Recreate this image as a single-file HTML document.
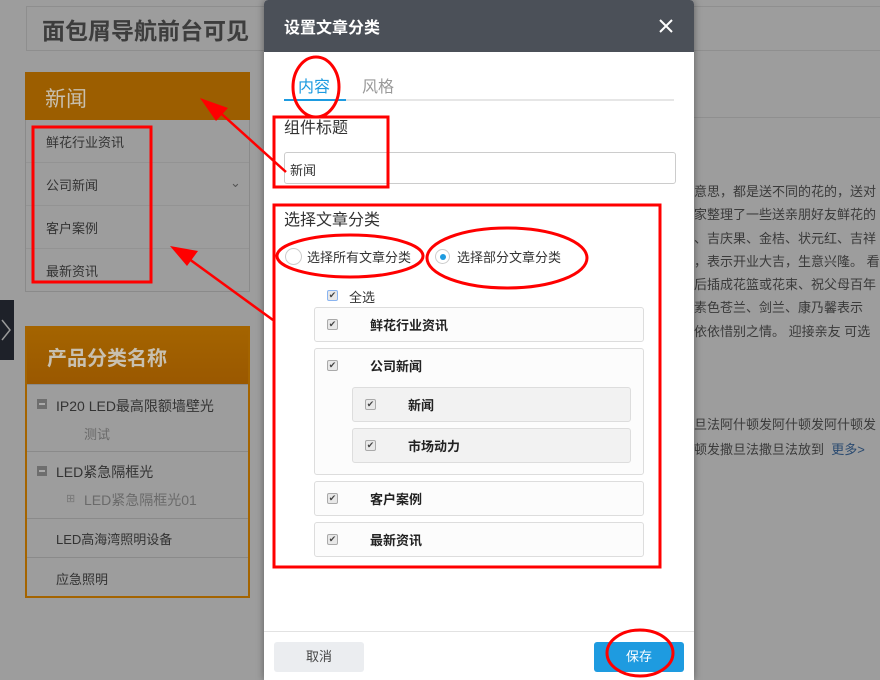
<!DOCTYPE html>
<html style="background:#9d9d9d"><head><meta charset="utf-8"><style>
*{margin:0;padding:0;box-sizing:border-box}
html,body{background:#9d9d9d}
body{width:880px;height:680px;overflow:hidden;position:relative;font-family:"Liberation Sans","Noto Sans CJK SC",sans-serif;color:#3a3a3a}
.a{position:absolute;white-space:nowrap;line-height:1.8}
.t{font-size:13px;color:#333}
.cb{position:absolute;width:11px;height:11px;border:1px solid #aaa;background:#e8e8e8;border-radius:2px;font-size:9px;line-height:9px;text-align:center;color:#444}
.box{position:absolute;border:1px solid #ddd;border-radius:3px;background:#fcfcfc}
.bi{position:absolute;font-size:13px;font-weight:bold;color:#222;line-height:1.8;white-space:nowrap}
</style></head><body>
<div class="a" style="left:0;top:0;width:880px;height:680px;background:#9d9d9d"></div>
<div class="a" style="left:26px;top:6px;width:240px;height:45px;border:1px solid #8e8e8e;border-right:none"></div>
<div class="a" style="left:42px;top:11px;font-size:23px;font-weight:bold;color:#3d3d3d">面包屑导航前台可见</div>
<div class="a" style="left:25px;top:72px;width:225px;height:48px;background:#9c5e00"></div>
<div class="a" style="left:45px;top:81px;font-size:21px;color:#c8c0b0">新闻</div>
<div class="a" style="left:25px;top:120px;width:225px;height:172px;border:1px solid #8a8a8a;border-top:none"></div>
<div class="a" style="left:26px;top:162px;width:223px;border-top:1px solid #939393"></div>
<div class="a" style="left:26px;top:205px;width:223px;border-top:1px solid #939393"></div>
<div class="a" style="left:26px;top:248px;width:223px;border-top:1px solid #939393"></div>
<div class="a t" style="left:46px;top:131px">鲜花行业资讯</div>
<div class="a t" style="left:46px;top:174px">公司新闻</div>
<div class="a" style="left:230px;top:171px;font-size:13px;color:#555">&#8964;</div>
<div class="a t" style="left:46px;top:217px">客户案例</div>
<div class="a t" style="left:46px;top:260px">最新资讯</div>
<div class="a" style="left:0;top:300px;width:14px;height:60px;background:#1e2129"></div>
<svg class="a" style="left:0;top:318px" width="14" height="24"><path d="M2 2 L10 12 L2 22" fill="none" stroke="#999" stroke-width="1.5"/></svg>

<div class="a" style="left:25px;top:326px;width:225px;height:272px;border:2px solid #a46400"></div>
<div class="a" style="left:27px;top:328px;width:221px;height:56px;background:linear-gradient(#a46400,#9a5800)"></div>
<div class="a" style="left:47px;top:341px;font-size:20px;font-weight:bold;color:#c8c0b0">产品分类名称</div>
<div class="a" style="left:27px;top:384px;width:221px;border-top:1px solid #8a8a8a"></div>
<div class="a" style="left:27px;top:451px;width:221px;border-top:1px solid #8a8a8a"></div>
<div class="a" style="left:27px;top:518px;width:221px;border-top:1px solid #8a8a8a"></div>
<div class="a" style="left:27px;top:557px;width:221px;border-top:1px solid #8a8a8a"></div>
<div class="a" style="left:37px;top:399px;width:10px;height:10px;background:#6e6e6e"></div><div class="a" style="left:39px;top:403px;width:6px;height:2px;background:#aaa"></div>
<div class="a" style="left:56px;top:394px;font-size:14px;color:#333">IP20 LED最高限额墙壁光</div>
<div class="a" style="left:84px;top:423px;font-size:13px;color:#6a6a6a">测试</div>
<div class="a" style="left:37px;top:466px;width:10px;height:10px;background:#6e6e6e"></div><div class="a" style="left:39px;top:470px;width:6px;height:2px;background:#aaa"></div>
<div class="a" style="left:56px;top:460px;font-size:14px;color:#333">LED紧急隔框光</div>
<div class="a" style="left:66px;top:490px;font-size:11px;color:#777">⊞</div>
<div class="a" style="left:84px;top:488px;font-size:14px;color:#6a6a6a">LED紧急隔框光01</div>
<div class="a" style="left:56px;top:528px;font-size:13px;color:#333">LED高海湾照明设备</div>
<div class="a" style="left:56px;top:568px;font-size:13px;color:#333">应急照明</div>

<div class="a" style="left:694px;top:6px;width:186px;border-top:1px solid #8f8f8f"></div>
<div class="a" style="left:694px;top:50px;width:186px;border-top:1px solid #8f8f8f"></div>
<div class="a" style="left:694px;top:117px;width:186px;border-top:1px solid #8f8f8f"></div>
<div class="a" style="left:694px;top:180px;font-size:13px;color:#3a3a3a;line-height:23.3px">意思，都是送不同的花的，送对<br>家整理了一些送亲朋好友鲜花的<br>、吉庆果、金桔、状元红、吉祥<br>，表示开业大吉，生意兴隆。 看<br>后插成花篮或花束、祝父母百年<br>素色苍兰、剑兰、康乃馨表示<br>依依惜别之情。 迎接亲友 可选</div>
<div class="a" style="left:694px;top:412px;font-size:13px;color:#3a3a3a;line-height:25px">旦法阿什顿发阿什顿发阿什顿发<br>顿发撒旦法撒旦法放到 &nbsp;<span style="color:#2a4a70">更多&gt;</span></div>

<div class="a" style="left:264px;top:0;width:430px;height:680px;background:#fff;box-shadow:0 0 8px rgba(0,0,0,.4);border-radius:4px 4px 0 0"></div>
<div class="a" style="left:264px;top:0;width:430px;height:52px;background:#4b5058;border-radius:4px 4px 0 0"></div>
<div class="a" style="left:284px;top:15px;font-size:16px;font-weight:bold;color:#fff">设置文章分类</div>
<svg class="a" style="left:658px;top:18px" width="16" height="16"><path d="M2 2 L14 14 M14 2 L2 14" stroke="#fff" stroke-width="2"/></svg>
<div class="a" style="left:298px;top:74px;font-size:16px;color:#1e9be0">内容</div>
<div class="a" style="left:362px;top:74px;font-size:16px;color:#999">风格</div>
<div class="a" style="left:284px;top:99px;width:390px;height:2px;background:#e6e6e6"></div>
<div class="a" style="left:284px;top:99px;width:62px;height:2px;background:#1e9be0"></div>
<div class="a" style="left:284px;top:115px;font-size:16px;color:#333">组件标题</div>
<div class="a" style="left:284px;top:152px;width:392px;height:32px;border:1px solid #ccc;border-radius:3px"></div>
<div class="a" style="left:290px;top:159px;font-size:13px;color:#333">新闻</div>
<div class="a" style="left:284px;top:207px;font-size:16px;color:#333">选择文章分类</div>
<div class="a" style="left:285px;top:248px;width:17px;height:17px;border:1px solid #ccc;border-radius:50%"></div>
<div class="a" style="left:307px;top:246px;font-size:13px;color:#333">选择所有文章分类</div>
<div class="a" style="left:435px;top:249px;width:15px;height:15px;border:1px solid #ccc;border-radius:50%"></div>
<div class="a" style="left:440px;top:254px;width:6px;height:6px;background:#1e9be0;border-radius:50%"></div>
<div class="a" style="left:457px;top:246px;font-size:13px;color:#333">选择部分文章分类</div>
<div class="cb" style="left:327px;top:290px;border-color:#8ab4f0">✔</div>
<div class="a" style="left:349px;top:286px;font-size:13px;color:#333">全选</div>

<div class="box" style="left:314px;top:307px;width:330px;height:35px"></div>
<div class="cb" style="left:327px;top:319px">✔</div><div class="bi" style="left:370px;top:314px">鲜花行业资讯</div>
<div class="box" style="left:314px;top:348px;width:330px;height:127px"></div>
<div class="cb" style="left:327px;top:360px">✔</div><div class="bi" style="left:370px;top:355px">公司新闻</div>
<div class="box" style="left:352px;top:387px;width:279px;height:35px;background:#f2f2f2"></div>
<div class="cb" style="left:365px;top:399px">✔</div><div class="bi" style="left:408px;top:394px">新闻</div>
<div class="box" style="left:352px;top:428px;width:279px;height:35px;background:#f2f2f2"></div>
<div class="cb" style="left:365px;top:440px">✔</div><div class="bi" style="left:408px;top:435px">市场动力</div>
<div class="box" style="left:314px;top:481px;width:330px;height:35px"></div>
<div class="cb" style="left:327px;top:493px">✔</div><div class="bi" style="left:370px;top:488px">客户案例</div>
<div class="box" style="left:314px;top:522px;width:330px;height:35px"></div>
<div class="cb" style="left:327px;top:534px">✔</div><div class="bi" style="left:370px;top:529px">最新资讯</div>

<div class="a" style="left:264px;top:631px;width:430px;border-top:1px solid #e2e2e2"></div>
<div class="a" style="left:274px;top:642px;width:90px;height:30px;background:#ebedf0;border-radius:3px;font-size:13px;text-align:center;line-height:30px;color:#444">取消</div>
<div class="a" style="left:594px;top:642px;width:90px;height:30px;background:#1e9be0;border-radius:3px;font-size:13px;text-align:center;line-height:30px;color:#fff">保存</div>

<svg class="a" style="left:0;top:0" width="880" height="680">
<g fill="none" stroke="#f00" stroke-width="3">
<rect x="33" y="127" width="118" height="155"/>
<rect x="274" y="117" width="114" height="70"/>
<rect x="274" y="205" width="386" height="362"/>
<ellipse cx="316" cy="87" rx="23" ry="30"/>
<ellipse cx="350" cy="256" rx="73" ry="21"/>
<ellipse cx="507" cy="258" rx="80" ry="30"/>
<ellipse cx="640" cy="653" rx="33" ry="23"/>
</g>
<g stroke="#f00" stroke-width="2.5"><line x1="286" y1="172" x2="215" y2="108"/><line x1="273" y1="320" x2="185" y2="256"/></g>
<polygon points="200,98 228,108 216,121" fill="#f00"/>
<polygon points="170,246 198,251 187,266" fill="#f00"/>
</svg>
</body></html>
